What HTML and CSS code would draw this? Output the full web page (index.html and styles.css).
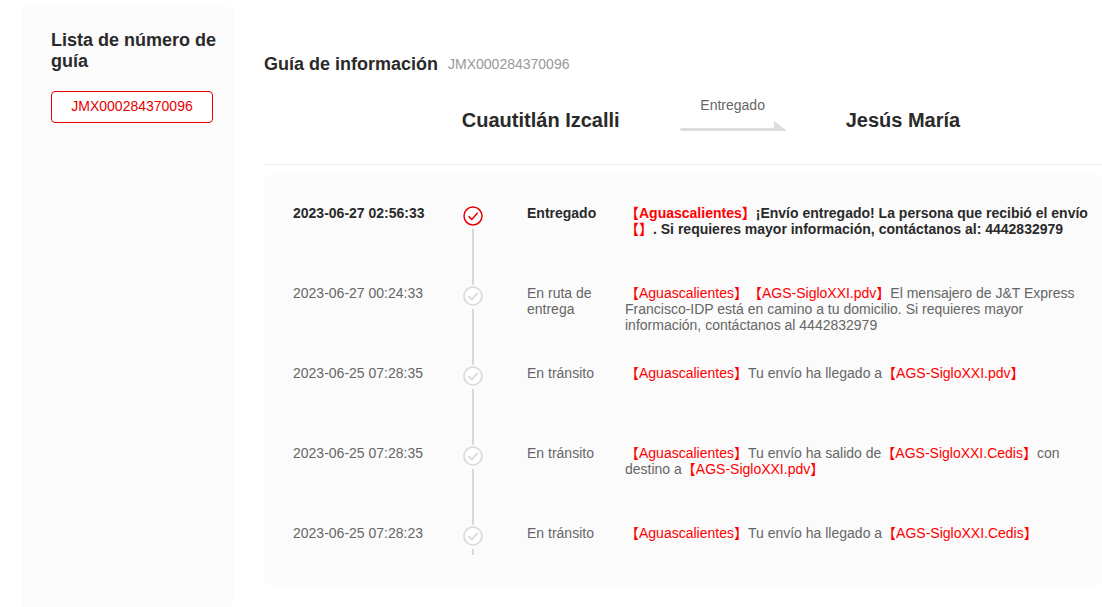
FILE: index.html
```html
<!DOCTYPE html>
<html lang="es">
<head>
    <meta charset="UTF-8">
    <meta name="viewport" content="width=device-width, initial-scale=1.0">
    <title>Guía de información</title>
    <link rel="stylesheet" href="styles.css">
</head>
<body>

<!-- Status icons -->
<svg class="icon-defs" aria-hidden="true">
    <symbol id="check" viewBox="1 1 22 22">
        <circle cx="12" cy="12" r="9" />
        <path d="M7.5 12.2l3.3 3.2 5.9-6.6" />
    </symbol>
</svg>

<div class="page">
    <!-- Waybill list -->
    <aside class="sidebar">
        <h2>Lista de número de guía</h2>
        <button type="button" class="waybill">JMX000284370096</button>
    </aside>

    <main class="content">
        <header class="info">
            <h1>Guía de información</h1>
            <span class="number">JMX000284370096</span>
        </header>

        <div class="route">
            <div class="city">Cuautitlán Izcalli</div>
            <div class="arrow">
                <span>Entregado</span>
                <svg width="106" height="10" viewBox="0 0 106 10" aria-hidden="true">
                    <path d="M1.5 7H94V0l12 9v1H1.5a1.5 1.5 0 0 1 0-3z" />
                </svg>
            </div>
            <div class="city">Jesús María</div>
        </div>

        <!-- Tracking history -->
        <ol class="timeline">
            <li class="step active">
                <time>2023-06-27 02:56:33</time>
                <div class="marker"><svg class="check"><use href="#check" /></svg></div>
                <div class="status">Entregado</div>
                <p><span class="place">【Aguascalientes】</span>¡Envío entregado! La persona que recibió el envío <span class="place">【】</span>. Si requieres mayor información, contáctanos al: 4442832979</p>
            </li>
            <li class="step">
                <time>2023-06-27 00:24:33</time>
                <div class="marker"><svg class="check"><use href="#check" /></svg></div>
                <div class="status">En ruta de entrega</div>
                <p><span class="place">【Aguascalientes】【AGS-SigloXXI.pdv】</span>El mensajero de J&amp;T Express Francisco-IDP está en camino a tu domicilio. Si requieres mayor información, contáctanos al 4442832979</p>
            </li>
            <li class="step">
                <time>2023-06-25 07:28:35</time>
                <div class="marker"><svg class="check"><use href="#check" /></svg></div>
                <div class="status">En tránsito</div>
                <p><span class="place">【Aguascalientes】</span>Tu envío ha llegado a<span class="place">【AGS-SigloXXI.pdv】</span></p>
            </li>
            <li class="step">
                <time>2023-06-25 07:28:35</time>
                <div class="marker"><svg class="check"><use href="#check" /></svg></div>
                <div class="status">En tránsito</div>
                <p><span class="place">【Aguascalientes】</span>Tu envío ha salido de<span class="place">【AGS-SigloXXI.Cedis】</span>con destino a<span class="place">【AGS-SigloXXI.pdv】</span></p>
            </li>
            <li class="step">
                <time>2023-06-25 07:28:23</time>
                <div class="marker"><svg class="check"><use href="#check" /></svg></div>
                <div class="status">En tránsito</div>
                <p><span class="place">【Aguascalientes】</span>Tu envío ha llegado a<span class="place">【AGS-SigloXXI.Cedis】</span></p>
            </li>
        </ol>
    </main>
</div>

</body>
</html>
```
FILE: styles.css
```css
* {
    box-sizing: border-box;
    margin: 0;
    padding: 0;
}

body {
    background-color: #fff;
    color: #666;
    font-family: "Liberation Sans", Arial, "Noto Sans CJK JP", sans-serif;
    font-size: 14px;
    line-height: 16px;
}

.icon-defs {
    display: none;
}

.page {
    display: flex;
    gap: 31px;
    min-height: 100vh;
    padding: 7px 0 0 22px;
}

/* Sidebar */
.sidebar {
    flex: none;
    width: 211px;
    padding: 23px 16px 23px 29px;
    background-color: #fbfbfb;
    border-radius: 3px;
}

h1,
h2 {
    color: #2a2a2a;
    font-size: 18px;
    line-height: 21px;
}

.waybill {
    width: 162px;
    height: 32px;
    margin-top: 19px;
    padding-bottom: 2px;
    border: 1px solid #e60000;
    border-radius: 4px;
    background-color: #fff;
    color: #e60000;
    font: inherit;
    cursor: pointer;
}

/* Main column */
.content {
    flex: 1;
    min-width: 0;
    padding-top: 47px;
}

.info {
    display: flex;
    align-items: flex-start;
    gap: 10px;
}

.number {
    padding-top: 2px;
    color: #999;
}

.route {
    display: flex;
    justify-content: center;
    gap: 60px;
    padding: 22px 0 32px 56px;
    border-bottom: 1px solid #eee;
}

.city {
    padding-top: 11px;
    color: #2a2a2a;
    font-size: 20px;
    font-weight: bold;
    line-height: 24px;
}

.arrow {
    display: flex;
    flex-direction: column;
    align-items: center;
    gap: 8px;
}

.arrow svg {
    fill: #ddd;
}

/* Timeline */
.timeline {
    margin-top: 10px;
    padding: 30px 10px 30px 29px;
    background-color: #fbfbfb;
    border-radius: 4px;
    list-style: none;
    text-spacing-trim: space-all;
}

.step {
    display: grid;
    grid-template-columns: 168px 66px 98px 1fr;
    min-height: 80px;
}

.step:last-child {
    min-height: 30px;
}

.marker {
    display: flex;
    flex-direction: column;
    align-items: center;
    width: 24px;
}

/* Line down to the next step */
.marker::after {
    content: "";
    flex: 1;
    width: 2px;
    background-color: #d8d8d8;
}

.status {
    padding-right: 28px;
}

.check {
    width: 22px;
    height: 22px;
    margin-bottom: 2px;
    border-radius: 50%;
    background-color: #fff;
    fill: none;
    stroke: #ddd;
    stroke-width: 2;
}

.active .check {
    stroke: #e60000;
    stroke-width: 1.5;
}

.active {
    color: #2a2a2a;
    font-weight: bold;
}

.place {
    color: #f00;
}
```
